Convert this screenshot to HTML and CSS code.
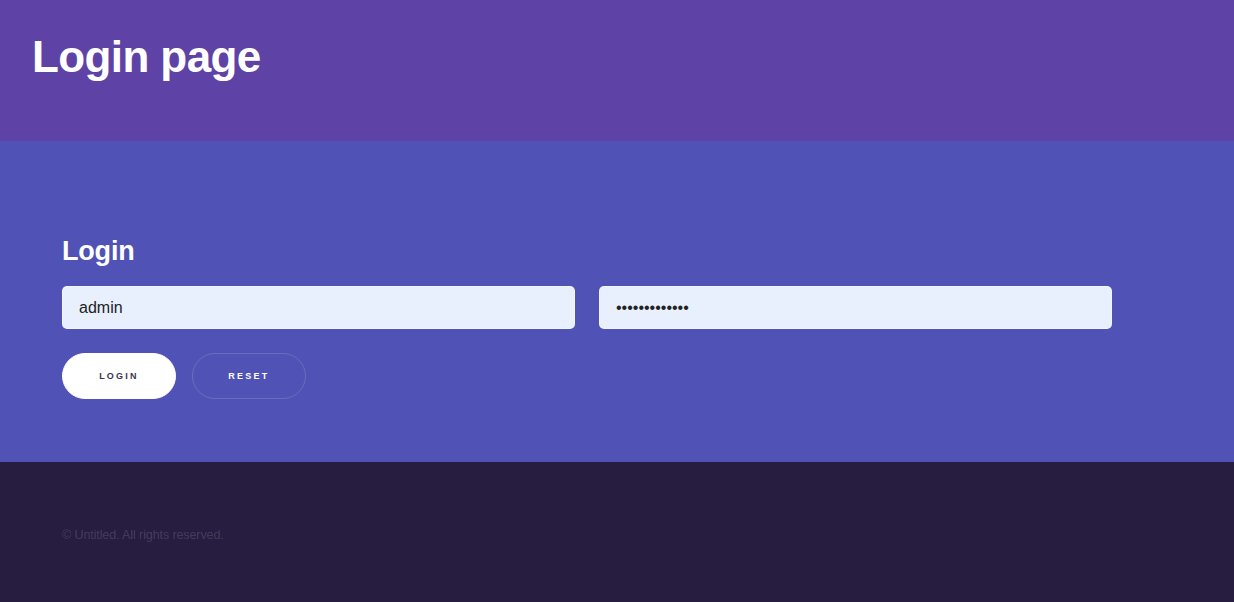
FILE: index.html
```html
<!DOCTYPE html>
<html>
<head>
<meta charset="utf-8">
<title>Login page</title>
<link rel="stylesheet" href="styles.css">
</head>
<body>
<header class="topbar">
  <h1 class="title">Login page</h1>
</header>
<main class="panel">
  <h2 class="panel-title">Login</h2>
  <form class="form">
    <div class="fields">
      <input class="field" type="text" value="admin">
      <input class="field" type="password" value="passwordpassw">
    </div>
    <div class="actions">
      <button type="button" class="btn btn-primary">Login</button>
      <button type="reset" class="btn btn-ghost">Reset</button>
    </div>
  </form>
</main>
<footer class="footer">
  <p class="copy">© Untitled. All rights reserved.</p>
</footer>
</body>
</html>
```
FILE: styles.css
```css
* { box-sizing: border-box; }
html, body { margin: 0; padding: 0; }
body {
  font-family: "Liberation Sans", Arial, sans-serif;
  width: 1234px;
  height: 602px;
  overflow: hidden;
  display: flex;
  flex-direction: column;
}
.topbar {
  background: #5e42a6;
  height: 141px;
  padding: 35px 32px 0;
}
.title {
  margin: 0;
  color: #fff;
  font-size: 44px;
  line-height: 1;
  font-weight: 700;
  letter-spacing: -0.6px;
}
.panel {
  background: #5052b5;
  height: 321px;
  padding: 97px 62px 0;
}
.panel-title {
  margin: 0 0 21px;
  color: #fff;
  font-size: 27px;
  line-height: 1;
  font-weight: 700;
  letter-spacing: -0.2px;
}
.fields {
  width: 1050px;
  display: grid;
  grid-template-columns: 1fr 1fr;
  gap: 24px;
}
.field {
  height: 43px;
  border: 1px solid rgba(255,255,255,0.35);
  border-radius: 5px;
  background: #e8f0fe;
  color: #222;
  font-family: "Liberation Sans", Arial, sans-serif;
  font-size: 16px;
  padding: 0 16px;
  outline: none;
}
.actions {
  margin-top: 24px;
  display: flex;
  gap: 16px;
}
.btn {
  height: 46px;
  width: 114px;
  border-radius: 23px;
  font-family: "Liberation Sans", Arial, sans-serif;
  font-size: 9px;
  font-weight: 700;
  letter-spacing: 0.25em;
  text-transform: uppercase;
  padding: 0;
  cursor: pointer;
}
.btn-primary {
  background: #fff;
  color: #3a3550;
  border: 1px solid #fff;
}
.btn-ghost {
  background: transparent;
  color: #fff;
  border: 1px solid rgba(255,255,255,0.15);
}
.footer {
  background: #261d41;
  flex: 1;
  padding: 0 62px;
  display: flex;
  align-items: center;
}
.copy {
  margin: 6px 0 0;
  font-size: 12.5px;
  letter-spacing: -0.1px;
  color: rgba(255,255,255,0.15);
}
```
